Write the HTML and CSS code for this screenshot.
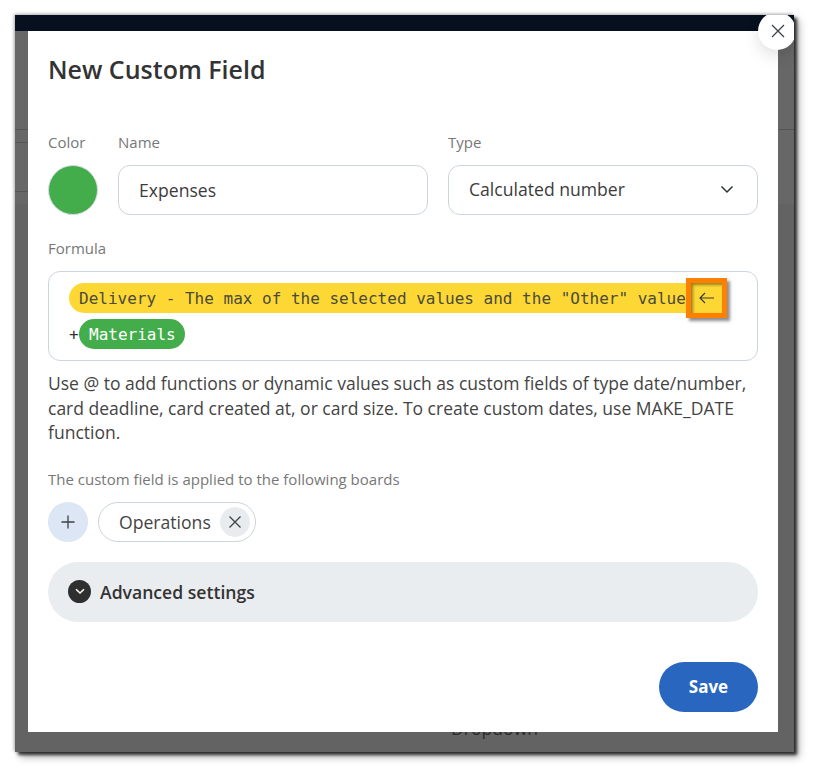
FILE: index.html
```html
<!DOCTYPE html>
<html lang="en">
<head>
<meta charset="utf-8">
<title>New Custom Field</title>
<link rel="stylesheet" href="styles.css">
</head>
<body>
<div class="window">
  <div class="topbar"></div>
  <div class="page-behind">
    <div class="band"></div>
    <div class="line line-a"></div>
    <div class="line line-b"></div>
    <div class="line line-c"></div>
    <div class="dropdown-text">Dropdown</div>
  </div>
  <main class="modal">
    <h1 class="title">New Custom Field</h1>
    <div class="row-fields">
      <div class="field field-color">
        <label class="label">Color</label>
        <div class="swatch"></div>
      </div>
      <div class="field field-name">
        <label class="label">Name</label>
        <div class="input">Expenses</div>
      </div>
      <div class="field field-type">
        <label class="label">Type</label>
        <div class="input select">
          <span>Calculated number</span>
          <svg class="chevron" width="14" height="9" viewBox="0 0 14 9"><path d="M1.500 1.500 7 7l5.500-5.500" fill="none" stroke="#2f3336" stroke-width="1.500"/></svg>
        </div>
      </div>
    </div>
    <label class="label label-formula">Formula</label>
    <div class="formula">
      <div class="formula-line">
        <span class="pill pill-yellow">Delivery - The max of the selected values and the "Other" value</span>
        <span class="arrow-box">
          <svg width="18" height="12" viewBox="0 0 18 12"><path d="M16 6H2M7 1 2 6l5 5" fill="none" stroke="#3a3a3a" stroke-width="1.200"/></svg>
        </span>
      </div>
      <div class="formula-line second"><span class="plus-text">+</span><span class="pill pill-green">Materials</span></div>
    </div>
    <p class="help">Use @ to add functions or dynamic values such as custom fields of type date/number, card deadline, card created at, or card size. To create custom dates, use MAKE_DATE function.</p>
    <p class="boards-label">The custom field is applied to the following boards</p>
    <div class="boards">
      <button class="add-board">
        <svg width="16" height="16" viewBox="0 0 16 16"><path d="M8 1.500v13M1.500 8h13" stroke="#3c4248" stroke-width="1.300" fill="none"/></svg>
      </button>
      <div class="chip">
        <span>Operations</span>
        <span class="chip-x">
          <svg width="14" height="14" viewBox="0 0 14 14"><path d="M1.500 1.500l11 11M12.500 1.500l-11 11" stroke="#3c4248" stroke-width="1.300" fill="none"/></svg>
        </span>
      </div>
    </div>
    <div class="advanced">
      <span class="adv-icon">
        <svg width="10" height="7" viewBox="0 0 10 7"><path d="M1 1.200 5 5l4-3.800" fill="none" stroke="#fff" stroke-width="1.500"/></svg>
      </span>
      <span>Advanced settings</span>
    </div>
    <div class="actions"><button class="save">Save</button></div>
  </main>
  <button class="close">
    <svg width="14" height="14" viewBox="0 0 14 14"><path d="M1 1l12 12M13 1 1 13" stroke="#3c4248" stroke-width="1.300" fill="none"/></svg>
  </button>
</div>
</body>
</html>
```
FILE: styles.css
```css
* { box-sizing: border-box; }
html, body { margin: 0; padding: 0; background: #fff; }
body { width: 821px; height: 779px; padding: 15px 0 0 15px; font-family: "Open Sans", "Noto Sans", sans-serif; color: #333; overflow: hidden; }
.window { position: relative; width: 779px; height: 737px; background: #636363; box-shadow: 3px 3px 3px rgba(0,0,0,.75), 5px 5px 8px rgba(0,0,0,.3), -1px -1px 3px rgba(0,0,0,.3); }
.topbar { height: 16px; background: #06101e; }
.page-behind { position: absolute; inset: 16px 0 0 0; overflow: hidden; }
.band { height: 173px; background: #676767; }
.line { position: absolute; left: 0; height: 1px; background: #555; }
.line-a { top: 98px; right: 0; }
.line-b { top: 111px; width: 13px; }
.line-c { top: 160px; width: 13px; }
.dropdown-text { position: absolute; top: 685px; left: 436px; font-size: 17.6px; color: #2a2a2a; }
.modal { position: relative; width: 750px; height: 701px; margin-left: 13px; background: #fff; padding: 20px 20px 0; }
.title { margin: 0; font-size: 25px; line-height: 36px; font-weight: 600; color: #333; }
.row-fields { display: flex; gap: 20px; margin-top: 45px; }
.field-name { width: 310px; }
.field-type { width: 310px; }
.label { display: block; font-size: 15px; line-height: 20px; color: #777; margin-bottom: 13px; }
.swatch { width: 50px; height: 50px; border-radius: 50%; background: #43ad4b; border: 1px solid #d5dbe0; }
.input { height: 50px; border: 1px solid #ccd5dc; border-radius: 12px; padding: 0 20px; display: flex; align-items: center; font-size: 17.6px; color: #3c3c3c; }
.select { justify-content: space-between; padding-right: 23px; padding-bottom: 2px; }
.label-formula { margin: 23px 0 13px; }
.formula { height: 90px; border: 1px solid #ccd5dc; border-radius: 12px; padding: 11px 20px 0; font-family: "DejaVu Sans Mono", monospace; font-size: 16px; }
.formula-line { display: flex; align-items: flex-start; height: 36px; }
.pill { display: inline-block; height: 30px; line-height: 32px; border-radius: 15px 0 0 15px; padding: 0 0 0 10px; white-space: nowrap; }
.pill-yellow { background: #fdd835; color: #4a4a3a; width: 617px; }
.arrow-box { width: 41px; height: 40px; margin: -5px 0 0 0; border: 5px solid #ff7f00; background: #fdd835; display: flex; align-items: center; justify-content: center; box-shadow: 3px 3px 3px rgba(0,0,0,.45), inset 2px 2px 3px rgba(0,0,0,.4); position: relative; }
.second { height: 30px; }
.plus-text { line-height: 32px; color: #333; width: 10px; }
.pill-green { background: #43ad4b; color: #fff; border-radius: 15px; padding: 0 10px; width: 106px; }
.help { margin: 10px 0 0; font-size: 17.53px; line-height: 24.5px; color: #444; }
.boards-label { margin: 24px 0 0; font-size: 15px; line-height: 20px; color: #777; }
.boards { display: flex; gap: 10px; margin-top: 13px; }
.add-board { width: 40px; height: 40px; border: 0; border-radius: 50%; background: #dce6f4; padding: 0; display: flex; align-items: center; justify-content: center; }
.chip { height: 40px; width: 158px; border: 1px solid #ccd5dc; border-radius: 20px; display: flex; align-items: center; justify-content: space-between; padding: 0 5px 0 20px; font-size: 17.6px; color: #444; }
.chip-x { width: 30px; height: 30px; border-radius: 50%; background: #e9ecef; display: flex; align-items: center; justify-content: center; }
.advanced { height: 60px; margin-top: 20px; border-radius: 30px; background: #eaedf0; display: flex; align-items: center; gap: 9px; padding: 0 20px; font-size: 17.6px; font-weight: 600; color: #333; }
.adv-icon { width: 23px; height: 23px; border-radius: 50%; background: #2f2f2f; display: flex; align-items: center; justify-content: center; }
.actions { display: flex; justify-content: flex-end; margin-top: 40px; }
.save { width: 99px; height: 50px; border: 0; border-radius: 25px; background: #2866bf; color: #fff; font-family: inherit; font-size: 17px; font-weight: 700; }
.close { position: absolute; top: -3px; left: 743px; width: 38px; height: 38px; border: 0; border-radius: 50%; background: #fff; padding: 0 0 0 2px; display: flex; align-items: center; justify-content: center; box-shadow: 0 6px 16px rgba(0,0,0,.12); clip-path: inset(3px 2px -30px -30px); }
```
